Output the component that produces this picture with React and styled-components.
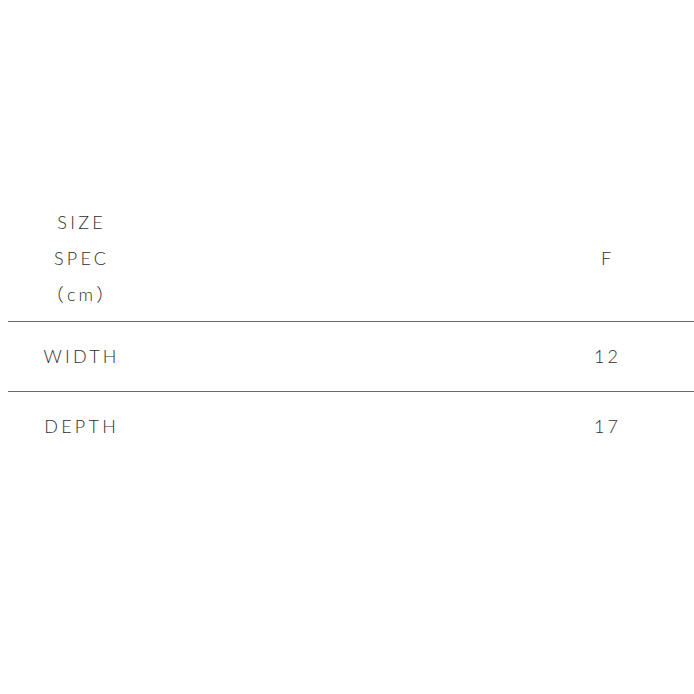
import React from "react";
import styled, { createGlobalStyle } from "styled-components";

const Global = createGlobalStyle`
  html { overflow: hidden; background: #fff; }
  body { margin: 8px 0 8px 8px; overflow: hidden; }
`;

const Page = styled.div`
  padding-top: 180px;
  width: 1052px;
`;

const Table = styled.div`
  display: grid;
  grid-template-columns: 144px 1fr;
  font-family: Lato, "Noto Sans CJK JP", sans-serif;
  font-weight: 300;
  font-size: 18px;
  letter-spacing: 0.18em;
  color: #2e2e2e;
`;

const Cell = styled.div`
  display: flex;
  align-items: center;
  justify-content: center;
  text-align: center;
  line-height: 36px;
  padding: ${(p) => (p.$head ? "16px 0 9px 0.18em" : "16px 0 17px 0.18em")};
  border-top: ${(p) => (p.$line ? "1px solid #6a6a6a" : "none")};
`;

export default function App() {
  return (
    <>
      <Global />
      <Page>
        <Table>
          <Cell $head>
            SIZE<br />SPEC<br />（cm）
          </Cell>
          <Cell $head>F</Cell>
          <Cell $line>WIDTH</Cell>
          <Cell $line>12</Cell>
          <Cell $line>DEPTH</Cell>
          <Cell $line>17</Cell>
        </Table>
      </Page>
    </>
  );
}
